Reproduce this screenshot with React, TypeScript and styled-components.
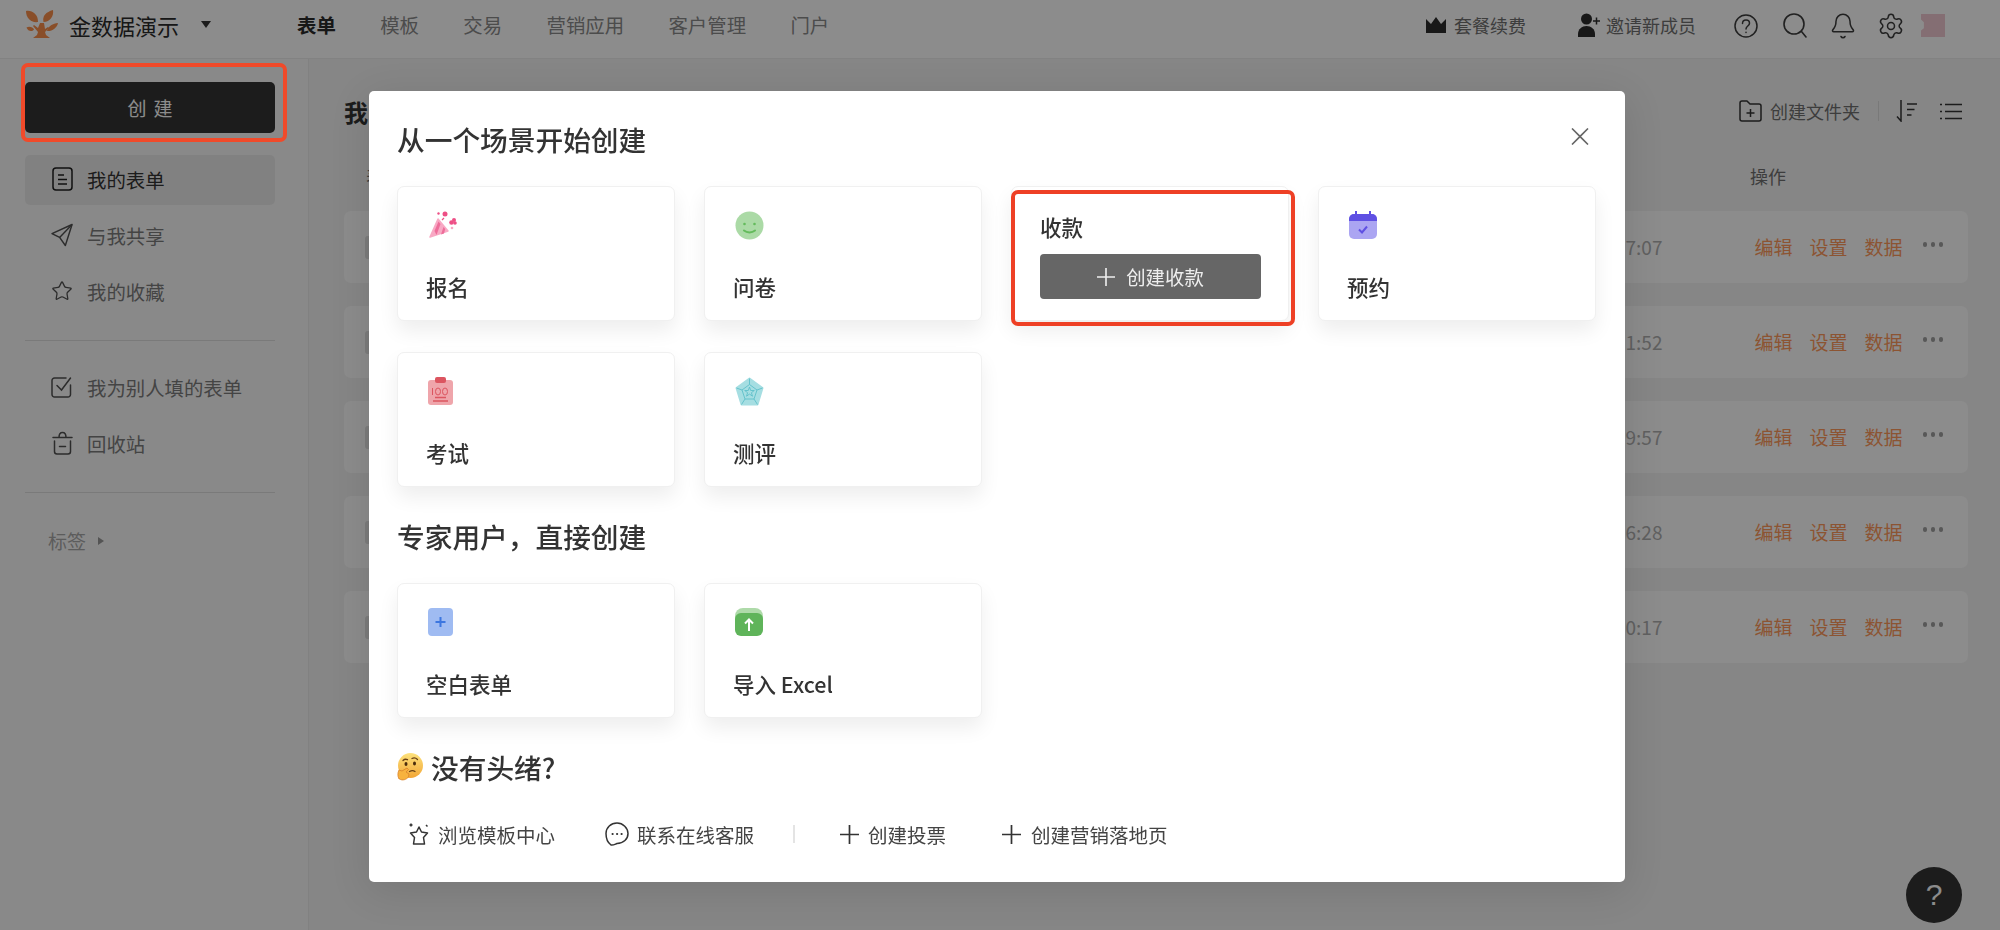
import React from "react";
import styled, { createGlobalStyle } from "styled-components";
import { Bell, Settings, Star } from "lucide-react";

const GlobalStyle = createGlobalStyle`
  html, body {
    margin: 0;
    padding: 0;
    width: 100%;
    height: 100%;
    overflow: hidden;
  }
  * {
    box-sizing: border-box;
  }
  body {
    font-family: "Noto Sans CJK SC", "Noto Sans", sans-serif;
    color: #333;
  }
`;

const Page = styled.div`
  width: 2000px;
  height: 930px;
  display: flex;
  flex-direction: column;
  background: #f5f5f5;
  overflow: hidden;
`;

const Header = styled.header`
  height: 59px;
  flex: none;
  display: flex;
  align-items: center;
  padding: 0 55px 9px 25px;
  background: #fff;
  border-bottom: 1px solid #ededed;
`;

const Brand = styled.div`
  display: flex;
  align-items: center;
  width: 272px;
  font-size: 22px;
  color: #2a2a2a;
`;

const BrandName = styled.span`
  margin-left: 11px;
`;

const Caret = styled.span`
  margin-left: 22px;
  width: 0;
  height: 0;
  border-left: 5px solid transparent;
  border-right: 5px solid transparent;
  border-top: 7px solid #333;
`;

const Nav = styled.nav`
  display: flex;
  gap: 44.4px;
  flex: 1;
`;

const NavLink = styled.a<{ $active?: boolean }>`
  font-size: 19.4px;
  color: ${({ $active }) => ($active ? "#2a2a2a" : "#8a8a8a")};
  font-weight: ${({ $active }) => ($active ? 700 : 400)};
`;

const HeaderAction = styled.div<{ $gap: number }>`
  display: flex;
  align-items: center;
  gap: ${({ $gap }) => $gap}px;
  font-size: 18px;
  color: #707070;
  margin-right: 52px;
`;

const HeaderIcons = styled.div`
  display: flex;
  align-items: center;
  margin-left: -14px;
  margin-top: 2px;
  color: #3c3c3c;
`;

const IconSlot = styled.span<{ $left: number }>`
  display: flex;
  margin-left: ${({ $left }) => $left}px;
`;

const Avatar = styled.div`
  width: 24px;
  height: 23px;
  margin-left: 16px;
  background: #f0c9d2;
  clip-path: polygon(0 0, 100% 0, 100% 100%, 0 100%, 0 72%, 12% 62%, 12% 36%, 0 24%);
`;

const Body = styled.div`
  flex: 1;
  display: flex;
  min-height: 0;
`;

const Sidebar = styled.aside`
  width: 309px;
  flex: none;
  padding: 23px 33px 0 25px;
  background: #fafafa;
  border-right: 1px solid #ebebeb;
`;

const CreateWrap = styled.div`
  position: relative;
  margin-bottom: 22px;
`;

const CreateButton = styled.button`
  width: 100%;
  height: 51px;
  border: 0;
  border-radius: 5px;
  background: #333;
  color: #fff;
  font: inherit;
  font-size: 19px;
  letter-spacing: 7px;
  text-indent: 7px;
`;

const CreateMark = styled.div`
  position: absolute;
  z-index: 20;
  left: -4px;
  right: -12px;
  top: -19px;
  bottom: -9px;
  border: 4px solid #f04a2a;
  border-radius: 7px;
`;

const Menu = styled.ul`
  list-style: none;
  margin: 0;
  padding: 0;
  display: flex;
  flex-direction: column;
  gap: 6px;
`;

const MenuItem = styled.li<{ $active?: boolean }>`
  height: 50px;
  display: flex;
  align-items: center;
  gap: 14px;
  padding: 0 0 2px 26px;
  border-radius: 5px;
  font-size: 19.4px;
  background: ${({ $active }) => ($active ? "#ececec" : "transparent")};
  color: ${({ $active }) => ($active ? "#333" : "#7d7d7d")};
`;

const MenuIcon = styled.span`
  width: 22px;
  display: flex;
  justify-content: center;
  color: #555;
`;

const Divider = styled.hr`
  height: 1px;
  border: 0;
  margin: 23px 0 22px;
  background: #dedede;
`;

const TagRow = styled.div`
  display: flex;
  align-items: center;
  gap: 12px;
  padding: 12px 0 0 23px;
  font-size: 19px;
  color: #a8a8a8;
`;

const TagCaret = styled.span`
  width: 0;
  height: 0;
  border-top: 4px solid transparent;
  border-bottom: 4px solid transparent;
  border-left: 6px solid #999;
`;

const Main = styled.main`
  flex: 1;
  padding: 34px 32px 0 35px;
`;

const MainTop = styled.div`
  height: 36px;
  display: flex;
  align-items: center;
  justify-content: space-between;
  padding-right: 6px;
`;

const MainTitle = styled.h1`
  margin: 0;
  font-size: 24px;
  font-weight: 700;
  color: #333;
`;

const Tools = styled.div`
  display: flex;
  align-items: center;
  color: #707070;
  font-size: 18px;
`;

const ToolLabel = styled.span`
  margin-left: 8.5px;
`;

const ToolSep = styled.span`
  width: 1px;
  height: 20px;
  margin: 0 17px 0 18px;
  background: #dcdcdc;
`;

const ToolIcon = styled.span`
  display: flex;
  margin-right: 22px;

  &:last-child {
    margin-right: 0;
  }
`;

const ListHead = styled.div`
  height: 82px;
  padding: 12px 0 0 22px;
  display: flex;
  align-items: center;
  justify-content: space-between;
  font-size: 18px;
  color: #707070;
`;

const OpHead = styled.span`
  width: 218px;
`;

const Rows = styled.div`
  display: flex;
  flex-direction: column;
  gap: 23px;
`;

const Row = styled.div`
  height: 72px;
  display: flex;
  align-items: center;
  justify-content: space-between;
  padding: 0 25px 0 21px;
  background: #ffffff;
  border-radius: 7px;
`;

const RowThumb = styled.span`
  width: 22px;
  height: 23px;
  background: #e2e2e2;
  border-radius: 3px;
`;

const RowRight = styled.div`
  display: flex;
  align-items: center;
  margin-bottom: 2px;
`;

const RowTime = styled.span`
  font-size: 19px;
  color: #b0b0b0;
  margin-right: 92px;
`;

const RowLink = styled.a`
  font-size: 19px;
  color: #ff9a5c;
  margin-right: 17px;
`;

const Dots = styled.span`
  display: flex;
  gap: 3.5px;
  margin-left: 3px;
  margin-bottom: 3px;
`;

const Dot = styled.i`
  width: 4.5px;
  height: 4.5px;
  border-radius: 50%;
  background: #a0a0a0;
`;

const Backdrop = styled.div`
  position: fixed;
  inset: 0;
  z-index: 10;
  padding: 91px 0 0 369px;
  background: rgba(0, 0, 0, 0.45);
`;

const Modal = styled.section`
  position: relative;
  width: 1256px;
  height: 791px;
  padding: 28px 28px 0 28px;
  background: #fff;
  border-radius: 5px;
  box-shadow: 0 8px 40px rgba(0, 0, 0, 0.12);
`;

const CloseButton = styled.button`
  position: absolute;
  top: 37px;
  right: 36px;
  padding: 0;
  border: 0;
  background: none;
  display: flex;
`;

const SectionTitle = styled.h2`
  margin: 0;
  height: 40px;
  display: flex;
  align-items: center;
  gap: 8px;
  font-size: 27.7px;
  line-height: 40px;
  font-weight: 500;
  color: #333;
`;

const CardGrid = styled.div`
  display: grid;
  grid-template-columns: repeat(4, 278px);
  column-gap: 29px;
  row-gap: 31px;
  margin: 27px 0 29px;
`;

const Card = styled.div`
  position: relative;
  height: 135px;
  padding: 24px 28px 0;
  border: 1px solid #f0f0f0;
  border-radius: 7px;
  background: #fff;
  box-shadow: 0 10px 20px rgba(0, 0, 0, 0.07);
`;

const CardIcon = styled.div`
  height: 30px;
  margin-left: 2px;
  display: flex;
  align-items: flex-start;
`;

const CardLabel = styled.div`
  margin-top: 30px;
  font-size: 21.5px;
  line-height: 32px;
  font-weight: 500;
  color: #333;
`;

const PayCard = styled(Card)`
  padding-top: 24px;
`;

const PayLabel = styled(CardLabel)`
  margin-top: 0;
`;

const PayButton = styled.button`
  width: 221px;
  height: 45px;
  margin-top: 11px;
  display: flex;
  align-items: center;
  justify-content: center;
  gap: 11px;
  border: 0;
  border-radius: 4px;
  background: #666;
  color: #eee;
  font: inherit;
  font-size: 19.4px;
`;

const PayMark = styled.div`
  position: absolute;
  left: -1px;
  right: -7px;
  top: 3px;
  bottom: -6px;
  border: 4px solid #ee4025;
  border-radius: 7px;
`;

const FootLinks = styled.div`
  display: flex;
  align-items: center;
  height: 30px;
  margin-top: 32px;
  padding-left: 11px;
  font-size: 19.5px;
  color: #444;
`;

const FootLink = styled.a<{ $after: number; $iconGap: number }>`
  display: flex;
  align-items: center;
  gap: ${({ $iconGap }) => $iconGap}px;
  margin-right: ${({ $after }) => $after}px;
`;

const FootSep = styled.span`
  width: 2px;
  height: 18px;
  margin-right: 45px;
  background: #e4e4e4;
`;

const HelpButton = styled.button`
  position: fixed;
  z-index: 5;
  left: 1906px;
  top: 867px;
  width: 56px;
  height: 56px;
  padding: 0;
  border: 0;
  border-radius: 50%;
  background: #333;
  color: #fff;
  font-family: "Liberation Sans", sans-serif;
  font-size: 30px;
`;

const Logo = () => (
  <svg width="33" height="29" viewBox="0 0 33 29" fill="#f98f4b">
    <path d="M1 1C7 0 13 4 13 12 6 13 1 8 1 1z" />
    <path d="M28 0c1 6-3 12-9.500 12C17 6 21 2 28 0z" />
    <path d="M1.500 17.500C4 16 8 17 9 19.500 7 22 3 21.500 1.500 17.500z" />
    <path d="M33 13c-1 5-6 8.500-11 8 1-5 6-7.500 11-8z" />
    <path d="M15 13h4l1 6 3-2 1 1-4 4 1 3 4 3H8l4-3 1-3-5-6 1-1 4 3z" />
  </svg>
);

const Crown = () => (
  <svg width="20" height="16" viewBox="0 0 20 16">
    <path fill="#2c2c2c" d="M0 2l5 5 5-7 5 7 5-5v14H0z" />
  </svg>
);

const PersonPlus = () => (
  <svg width="22" height="24" viewBox="0 0 22 24">
    <circle cx="8.500" cy="6" r="5.500" fill="#2c2c2c" />
    <path fill="#2c2c2c" d="M0 24v-3c0-5 4-8 8.500-8s8.500 3 8.500 8v3z" />
    <path stroke="#2c2c2c" strokeWidth="1.500" d="M15 8h7M18.500 4.500v7" />
  </svg>
);

const HelpCircle = () => (
  <svg width="24" height="24" viewBox="0 0 24 24" fill="none" stroke="#3c3c3c" strokeWidth="1.500" strokeLinecap="round">
    <circle cx="12" cy="12" r="11" />
    <path d="M8.500 9.500c0-2 1.500-3.500 3.500-3.500s3.500 1.400 3.500 3.200c0 2.800-3.500 2.800-3.500 5.800" />
    <path d="M12 18.200v.3" />
  </svg>
);

const SearchIcon = () => (
  <svg width="24" height="25" viewBox="0 0 24 25" fill="none" stroke="#3c3c3c" strokeWidth="1.600" strokeLinecap="round">
    <circle cx="11" cy="11" r="10" />
    <path d="M18.500 18.500L23 24" />
  </svg>
);

const FolderPlus = () => (
  <svg width="23" height="22" viewBox="0 0 23 22" fill="none" stroke="#333" strokeWidth="1.500" strokeLinejoin="round">
    <path d="M1 3a2 2 0 0 1 2-2h5l3 3h9a2 2 0 0 1 2 2v13a2 2 0 0 1-2 2H3a2 2 0 0 1-2-2z" />
    <path d="M7.500 13h8M11.500 9v8" />
  </svg>
);

const SortIcon = () => (
  <svg width="22" height="22" viewBox="0 0 22 22" fill="none" stroke="#333" strokeWidth="1.500">
    <path d="M5 0v21L1 16.500" />
    <path d="M11 4h10M11 9.500h7.500M11 15h4.500" />
  </svg>
);

const ListIcon = () => (
  <svg width="22" height="17" viewBox="0 0 22 17" fill="none" stroke="#333" strokeWidth="1.500">
    <path d="M5 1.500h17M5 8.500h17M5 15.500h17" />
    <path d="M0 1.500h2M0 8.500h2M0 15.500h2" />
  </svg>
);

const FormIcon = () => (
  <svg width="21" height="24" viewBox="0 0 21 24" fill="none" stroke="#1c1c1c" strokeWidth="1.500">
    <rect x="1" y="1" width="19" height="22" rx="3" />
    <path d="M6 8h6M6 12.500h9M6 17h9" />
  </svg>
);

const PlaneIcon = () => (
  <svg width="23" height="24" viewBox="0 0 23 24" fill="none" stroke="#505050" strokeWidth="1.500" strokeLinejoin="round">
    <path d="M22 1L1 10.500l8 4 6 8.500z" />
    <path d="M22 1L9 14.500" />
  </svg>
);

const CheckSquare = () => (
  <svg width="22" height="22" viewBox="0 0 22 22" fill="none" stroke="#505050" strokeWidth="1.500" strokeLinecap="round">
    <path d="M19.500 9v9.500a2.500 2.500 0 0 1-2.500 2.500H3.500A2.500 2.500 0 0 1 1 18.500V4.500A2.500 2.500 0 0 1 3.500 2H15" />
    <path d="M6 9.500l4.500 4.500 9-12" />
  </svg>
);

const Trash = () => (
  <svg width="21" height="24" viewBox="0 0 21 24" fill="none" stroke="#505050" strokeWidth="1.500" strokeLinecap="round">
    <path d="M1 6.500h19M7 6.500c0-3 1-5 3.500-5s3.500 2 3.500 5" />
    <path d="M2.500 10v10.500a2.500 2.500 0 0 0 2.500 2.500h11a2.500 2.500 0 0 0 2.500-2.500V10" />
    <path d="M7.500 15.500h6" />
  </svg>
);

const PlusMark = ({ size, color }: { size: number; color: string }) => (
  <svg width={size} height={size} viewBox="0 0 20 20" fill="none" stroke={color} strokeWidth="1.800">
    <path d="M10 0v20M0 10h20" />
  </svg>
);

const CloseMark = () => (
  <svg width="18" height="17" viewBox="0 0 18 17" fill="none" stroke="#666" strokeWidth="1.600">
    <path d="M1 .5l16 16M17 .5l-16 16" />
  </svg>
);

const Party = () => (
  <svg width="30" height="28" viewBox="0 0 30 28">
    <path fill="#f8a9c4" stroke="#f8a9c4" strokeWidth="1.500" strokeLinejoin="round" d="M2 26L10 8l10 12z" />
    <path fill="#ee6d9a" d="M6.500 20L10.500 10.500l2 2.500-4 11zM13 23.500l2.500-7.500 1.700 2-1.200 4.500z" />
    <circle cx="17" cy="3" r="2.500" fill="#ee4f86" />
    <circle cx="10.500" cy="2.500" r="1.200" fill="#ee4f86" />
    <circle cx="26" cy="9" r="2" fill="#ee4f86" />
    <circle cx="23.500" cy="11.500" r="2.300" fill="#ee4f86" />
    <circle cx="27" cy="12" r="1.800" fill="#ee4f86" />
    <circle cx="24" cy="17" r="1.300" fill="#f8a9c4" />
    <path stroke="#ee4f86" strokeWidth="1.300" d="M14 9l2-2" />
  </svg>
);

const Smile = () => (
  <svg width="29" height="29" viewBox="0 0 29 29">
    <circle cx="14.500" cy="14.500" r="14" fill="#abdaa6" />
    <circle cx="9.500" cy="13" r="1.300" fill="#64bb5c" />
    <circle cx="19.500" cy="13" r="1.300" fill="#64bb5c" />
    <path fill="none" stroke="#64bb5c" strokeWidth="2" strokeLinecap="round" d="M9 19.500c3 2.500 8 2.500 11 0" />
  </svg>
);

const CalendarIcon = () => (
  <svg width="28" height="28" viewBox="0 0 28 28">
    <rect y="3" width="28" height="25" rx="5" fill="#aba5f2" />
    <path fill="#5f50e3" d="M0 10V8a5 5 0 0 1 5-5h18a5 5 0 0 1 5 5v2z" />
    <rect x="6" width="2" height="5" fill="#5f50e3" />
    <rect x="20" width="2" height="5" fill="#5f50e3" />
    <path fill="none" stroke="#5f50e3" strokeWidth="2" d="M10 18.500l3 3 5-6" />
  </svg>
);

const Exam = () => (
  <svg width="26" height="29" viewBox="0 0 26 29">
    <rect y="3" width="25" height="25" rx="3" fill="#efa5ab" />
    <rect x="7" width="11" height="6" rx="2" fill="#dc5560" />
    <g fill="none" stroke="#dc5560" strokeWidth="1">
      <path d="M4.500 11v7" />
      <ellipse cx="10" cy="14.500" rx="2.500" ry="3.500" />
      <ellipse cx="17" cy="14.500" rx="2.500" ry="3.500" />
      <path d="M7 20.500h11M5 24h15" strokeWidth="1.500" />
    </g>
  </svg>
);

const Radar = () => (
  <svg width="29" height="29" viewBox="0 0 29 29">
    <path fill="#a6dee2" stroke="#a6dee2" strokeWidth="2" strokeLinejoin="round" d="M14.500 1.500L27.500 11l-5 16.500H6.500L1.500 11z" />
    <path fill="none" stroke="#5fc0c9" strokeWidth=".9" d="M14.500 7.500L22 13l-3 9h-9l-3-9zM14.500 1.500v6M27.500 11L22 13M22.500 27.500L19 22M6.500 27.500L10 22M1.500 11L7 13" />
    <path fill="none" stroke="#5fc0c9" strokeWidth=".9" d="M14.500 10l1.200 3.500h3.600l-2.900 2.200 1.100 3.500-3-2.100-3 2.100 1.100-3.500-2.900-2.200h3.600z" />
  </svg>
);

const BlankForm = () => (
  <svg width="25" height="28" viewBox="0 0 25 28">
    <rect width="25" height="28" rx="4" fill="#9fbbf2" />
    <path stroke="#3c76e0" strokeWidth="2" d="M7.500 14h10M12.500 9v10" />
  </svg>
);

const ExcelIcon = () => (
  <svg width="28" height="28" viewBox="0 0 28 28">
    <path fill="#aedaa9" d="M0 8a8 8 0 0 1 8-8h12a8 8 0 0 1 8 8v8H0z" />
    <rect y="5" width="28" height="23" rx="6" fill="#5fb45a" />
    <path fill="none" stroke="#fff" strokeWidth="2" d="M14 23V12M10 15.500l4-4 4 4" />
  </svg>
);

const Thinking = () => (
  <svg width="26" height="28" viewBox="0 0 26 28">
    <defs>
      <linearGradient id="think" x1="0" y1="0" x2="0" y2="1">
        <stop offset="0%" stopColor="#fde27c" />
        <stop offset="100%" stopColor="#f2a636" />
      </linearGradient>
    </defs>
    <circle cx="13.500" cy="12.500" r="12.500" fill="url(#think)" />
    <path fill="none" stroke="#6a4216" strokeWidth="1.300" strokeLinecap="round" d="M6 7.500c1.500-1.500 3-1.500 4.500-.8M15 5.500c2-1 4-.5 5.500 1M12.500 18.500c2-1 4-1 5.500 0" />
    <ellipse cx="9" cy="11" rx="1.500" ry="2" fill="#4a2c0c" />
    <ellipse cx="17.500" cy="10.500" rx="1.500" ry="2" fill="#4a2c0c" />
    <path fill="#f7b23e" stroke="#d9812a" strokeWidth=".8" d="M2 26c-1.500-3-1.500-6 0-9l3 1 5-3 1.500 1.500-2.500 2.500 3 2-.5 3c-2 2.500-6 4-9 2z" />
  </svg>
);

const Templates = () => (
  <svg width="22" height="24" viewBox="0 0 22 24" fill="none" stroke="#333" strokeWidth="1.500" strokeLinejoin="round">
    <path d="M11 5l2.500 5 6 1-4 4.500 1 6.500H5.500l1-6.500-4-4.500 6-1z" />
    <path d="M3 1.500v3M1.500 3h3M18 3l1.500 1.500" />
  </svg>
);

const ChatBubble = () => (
  <svg width="24" height="25" viewBox="0 0 24 25" fill="none" stroke="#333" strokeWidth="1.500" strokeLinecap="round">
    <path d="M12 1C6 1 1 5.500 1 11.500c0 5 1.500 9 5 11.500 2 .5 3.500-.5 6-1.500 6.500 0 11-4.500 11-10S18 1 12 1z" />
    <path d="M7.500 12h.2M12 12h.2M16.500 12h.2" strokeWidth="2" />
  </svg>
);

type MenuEntry = { label: string; icon: React.ReactNode; active?: boolean };

const mainMenu: MenuEntry[] = [
  { label: "我的表单", icon: <FormIcon />, active: true },
  { label: "与我共享", icon: <PlaneIcon /> },
  { label: "我的收藏", icon: <Star size={26} strokeWidth={1.4} color="#505050" /> },
];

const otherMenu: MenuEntry[] = [
  { label: "我为别人填的表单", icon: <CheckSquare /> },
  { label: "回收站", icon: <Trash /> },
];

const times = ["13:17:07", "11:21:52", "10:19:57", "09:16:28", "08:10:17"];

type CardEntry = { label: string; icon: React.ReactNode };

const sceneCards: CardEntry[] = [
  { label: "考试", icon: <Exam /> },
  { label: "测评", icon: <Radar /> },
];

const expertCards: CardEntry[] = [
  { label: "空白表单", icon: <BlankForm /> },
  { label: "导入 Excel", icon: <ExcelIcon /> },
];

const SceneCard = ({ label, icon }: CardEntry) => (
  <Card>
    <CardIcon>{icon}</CardIcon>
    <CardLabel>{label}</CardLabel>
  </Card>
);

const SideList = ({ items }: { items: MenuEntry[] }) => (
  <Menu>
    {items.map((item) => (
      <MenuItem key={item.label} $active={item.active}>
        <MenuIcon>{item.icon}</MenuIcon>
        {item.label}
      </MenuItem>
    ))}
  </Menu>
);

export default function App() {
  return (
    <Page>
      <GlobalStyle />
      <Header>
        <Brand>
          <Logo />
          <BrandName>金数据演示</BrandName>
          <Caret />
        </Brand>
        <Nav>
          <NavLink $active>表单</NavLink>
          <NavLink>模板</NavLink>
          <NavLink>交易</NavLink>
          <NavLink>营销应用</NavLink>
          <NavLink>客户管理</NavLink>
          <NavLink>门户</NavLink>
        </Nav>
        <HeaderAction $gap={8}>
          <Crown />
          套餐续费
        </HeaderAction>
        <HeaderAction $gap={6}>
          <PersonPlus />
          邀请新成员
        </HeaderAction>
        <HeaderIcons>
          <HelpCircle />
          <IconSlot $left={25}>
            <SearchIcon />
          </IconSlot>
          <IconSlot $left={22}>
            <Bell size={28} strokeWidth={1.3} />
          </IconSlot>
          <IconSlot $left={20}>
            <Settings size={28} strokeWidth={1.3} />
          </IconSlot>
          <Avatar />
        </HeaderIcons>
      </Header>
      <Body>
        <Sidebar>
          <CreateWrap>
            <CreateButton>创建</CreateButton>
            <CreateMark />
          </CreateWrap>
          <SideList items={mainMenu} />
          <Divider />
          <SideList items={otherMenu} />
          <Divider />
          <TagRow>
            标签
            <TagCaret />
          </TagRow>
        </Sidebar>
        <Main>
          <MainTop>
            <MainTitle>我</MainTitle>
            <Tools>
              <FolderPlus />
              <ToolLabel>创建文件夹</ToolLabel>
              <ToolSep />
              <ToolIcon>
                <SortIcon />
              </ToolIcon>
              <ToolIcon>
                <ListIcon />
              </ToolIcon>
            </Tools>
          </MainTop>
          <ListHead>
            <span>表</span>
            <OpHead>操作</OpHead>
          </ListHead>
          <Rows>
            {times.map((time) => (
              <Row key={time}>
                <RowThumb />
                <RowRight>
                  <RowTime>{time}</RowTime>
                  <RowLink>编辑</RowLink>
                  <RowLink>设置</RowLink>
                  <RowLink>数据</RowLink>
                  <Dots>
                    <Dot />
                    <Dot />
                    <Dot />
                  </Dots>
                </RowRight>
              </Row>
            ))}
          </Rows>
        </Main>
      </Body>
      <HelpButton>?</HelpButton>
      <Backdrop>
        <Modal>
          <CloseButton>
            <CloseMark />
          </CloseButton>
          <SectionTitle>从一个场景开始创建</SectionTitle>
          <CardGrid>
            <SceneCard label="报名" icon={<Party />} />
            <SceneCard label="问卷" icon={<Smile />} />
            <PayCard>
              <PayLabel>收款</PayLabel>
              <PayButton>
                <PlusMark size={18} color="#eee" />
                创建收款
              </PayButton>
              <PayMark />
            </PayCard>
            <SceneCard label="预约" icon={<CalendarIcon />} />
            {sceneCards.map((card) => (
              <SceneCard key={card.label} {...card} />
            ))}
          </CardGrid>
          <SectionTitle>专家用户，直接创建</SectionTitle>
          <CardGrid>
            {expertCards.map((card) => (
              <SceneCard key={card.label} {...card} />
            ))}
          </CardGrid>
          <SectionTitle>
            <Thinking />
            没有头绪?
          </SectionTitle>
          <FootLinks>
            <FootLink $after={50} $iconGap={8}>
              <Templates />
              浏览模板中心
            </FootLink>
            <FootLink $after={39} $iconGap={8}>
              <ChatBubble />
              联系在线客服
            </FootLink>
            <FootSep />
            <FootLink $after={56} $iconGap={9}>
              <PlusMark size={19} color="#333" />
              创建投票
            </FootLink>
            <FootLink $after={0} $iconGap={10}>
              <PlusMark size={19} color="#333" />
              创建营销落地页
            </FootLink>
          </FootLinks>
        </Modal>
      </Backdrop>
    </Page>
  );
}
